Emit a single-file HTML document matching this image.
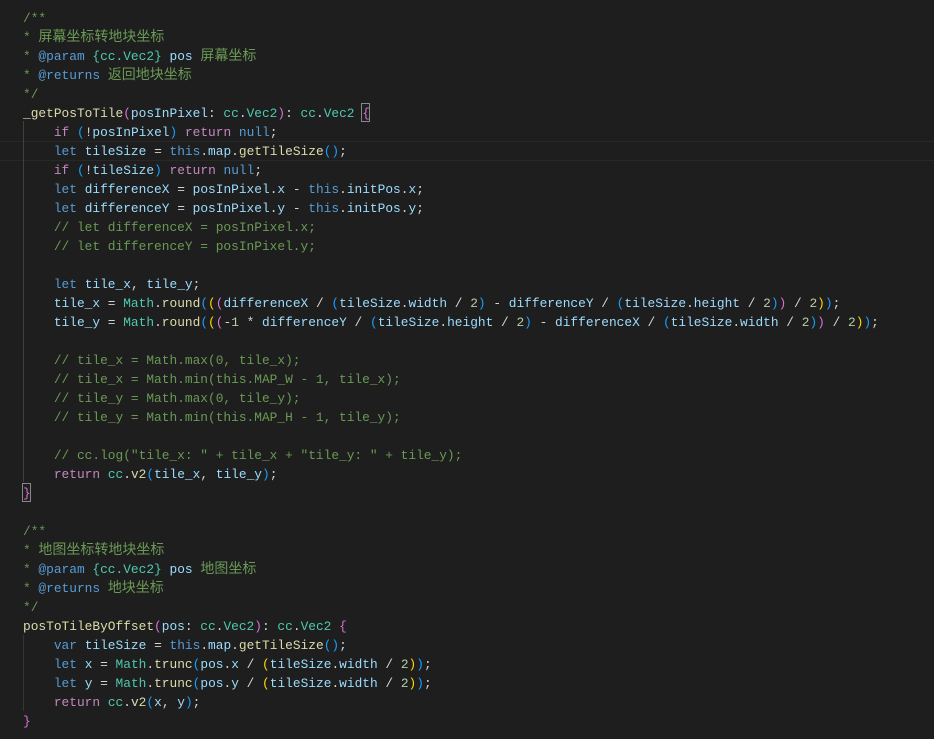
<!DOCTYPE html>
<html><head><meta charset="utf-8"><style>
html,body{margin:0;padding:0;background:#1e1e1e;width:934px;height:739px;overflow:hidden}
.code{position:absolute;left:23px;top:9px;font-family:"Liberation Mono","Noto Sans CJK SC",monospace;font-size:12.85px;color:#d4d4d4;white-space:normal}
.code div{height:19px;line-height:19px;overflow:visible;white-space:pre}
.c{color:#6a9955}.k{color:#569cd6}.r{color:#c586c0}.v{color:#9cdcfe}.f{color:#dcdcaa}.t{color:#4ec9b0}.n{color:#b5cea8}
.p1{color:#ffd700}.p2{color:#da70d6}.p3{color:#179fff}
.cj{font-size:14px;line-height:19px}
.hl{position:absolute;left:0;top:141px;width:934px;height:18px;border-top:1px solid #282828;border-bottom:1px solid #282828}
.g{position:absolute;left:23px;width:1px;background:#404040}
.bx{position:absolute;width:7px;height:17px;border:1px solid #888}
</style></head><body>
<div class="hl"></div>
<div class="g" style="top:121px;height:361px"></div>
<div class="g" style="top:635px;height:76px;background:#353535"></div>
<div class="bx" style="left:361px;top:103px"></div>
<div class="bx" style="left:22px;top:483px"></div>
<div class="code">
<div class="c">/**</div>
<div class="c">* <span class="cj">屏幕坐标转地块坐标</span></div>
<div class="c">* <span class="k">@param</span> <span class="t">{cc.Vec2}</span> <span class="v">pos</span> <span class="cj">屏幕坐标</span></div>
<div class="c">* <span class="k">@returns</span> <span class="cj">返回地块坐标</span></div>
<div class="c">*/</div>
<div><span class="f">_getPosToTile</span><span class="p2">(</span><span class="v">posInPixel</span>: <span class="t">cc</span>.<span class="t">Vec2</span><span class="p2">)</span>: <span class="t">cc</span>.<span class="t">Vec2</span> <span class="p2">{</span></div>
<div>    <span class="r">if</span> <span class="p3">(</span>!<span class="v">posInPixel</span><span class="p3">)</span> <span class="r">return</span> <span class="k">null</span>;</div>
<div>    <span class="k">let</span> <span class="v">tileSize</span> = <span class="k">this</span>.<span class="v">map</span>.<span class="f">getTileSize</span><span class="p3">()</span>;</div>
<div>    <span class="r">if</span> <span class="p3">(</span>!<span class="v">tileSize</span><span class="p3">)</span> <span class="r">return</span> <span class="k">null</span>;</div>
<div>    <span class="k">let</span> <span class="v">differenceX</span> = <span class="v">posInPixel</span>.<span class="v">x</span> - <span class="k">this</span>.<span class="v">initPos</span>.<span class="v">x</span>;</div>
<div>    <span class="k">let</span> <span class="v">differenceY</span> = <span class="v">posInPixel</span>.<span class="v">y</span> - <span class="k">this</span>.<span class="v">initPos</span>.<span class="v">y</span>;</div>
<div>    <span class="c">// let differenceX = posInPixel.x;</span></div>
<div>    <span class="c">// let differenceY = posInPixel.y;</span></div>
<div> </div>
<div>    <span class="k">let</span> <span class="v">tile_x</span>, <span class="v">tile_y</span>;</div>
<div>    <span class="v">tile_x</span> = <span class="t">Math</span>.<span class="f">round</span><span class="p3">(</span><span class="p1">(</span><span class="p2">(</span><span class="v">differenceX</span> / <span class="p3">(</span><span class="v">tileSize</span>.<span class="v">width</span> / <span class="n">2</span><span class="p3">)</span> - <span class="v">differenceY</span> / <span class="p3">(</span><span class="v">tileSize</span>.<span class="v">height</span> / <span class="n">2</span><span class="p3">)</span><span class="p2">)</span> / <span class="n">2</span><span class="p1">)</span><span class="p3">)</span>;</div>
<div>    <span class="v">tile_y</span> = <span class="t">Math</span>.<span class="f">round</span><span class="p3">(</span><span class="p1">(</span><span class="p2">(</span>-<span class="n">1</span> * <span class="v">differenceY</span> / <span class="p3">(</span><span class="v">tileSize</span>.<span class="v">height</span> / <span class="n">2</span><span class="p3">)</span> - <span class="v">differenceX</span> / <span class="p3">(</span><span class="v">tileSize</span>.<span class="v">width</span> / <span class="n">2</span><span class="p3">)</span><span class="p2">)</span> / <span class="n">2</span><span class="p1">)</span><span class="p3">)</span>;</div>
<div> </div>
<div>    <span class="c">// tile_x = Math.max(0, tile_x);</span></div>
<div>    <span class="c">// tile_x = Math.min(this.MAP_W - 1, tile_x);</span></div>
<div>    <span class="c">// tile_y = Math.max(0, tile_y);</span></div>
<div>    <span class="c">// tile_y = Math.min(this.MAP_H - 1, tile_y);</span></div>
<div> </div>
<div>    <span class="c">// cc.log("tile_x: " + tile_x + "tile_y: " + tile_y);</span></div>
<div>    <span class="r">return</span> <span class="t">cc</span>.<span class="f">v2</span><span class="p3">(</span><span class="v">tile_x</span>, <span class="v">tile_y</span><span class="p3">)</span>;</div>
<div><span class="p2">}</span></div>
<div> </div>
<div class="c">/**</div>
<div class="c">* <span class="cj">地图坐标转地块坐标</span></div>
<div class="c">* <span class="k">@param</span> <span class="t">{cc.Vec2}</span> <span class="v">pos</span> <span class="cj">地图坐标</span></div>
<div class="c">* <span class="k">@returns</span> <span class="cj">地块坐标</span></div>
<div class="c">*/</div>
<div><span class="f">posToTileByOffset</span><span class="p2">(</span><span class="v">pos</span>: <span class="t">cc</span>.<span class="t">Vec2</span><span class="p2">)</span>: <span class="t">cc</span>.<span class="t">Vec2</span> <span class="p2">{</span></div>
<div>    <span class="k">var</span> <span class="v">tileSize</span> = <span class="k">this</span>.<span class="v">map</span>.<span class="f">getTileSize</span><span class="p3">()</span>;</div>
<div>    <span class="k">let</span> <span class="v">x</span> = <span class="t">Math</span>.<span class="f">trunc</span><span class="p3">(</span><span class="v">pos</span>.<span class="v">x</span> / <span class="p1">(</span><span class="v">tileSize</span>.<span class="v">width</span> / <span class="n">2</span><span class="p1">)</span><span class="p3">)</span>;</div>
<div>    <span class="k">let</span> <span class="v">y</span> = <span class="t">Math</span>.<span class="f">trunc</span><span class="p3">(</span><span class="v">pos</span>.<span class="v">y</span> / <span class="p1">(</span><span class="v">tileSize</span>.<span class="v">width</span> / <span class="n">2</span><span class="p1">)</span><span class="p3">)</span>;</div>
<div>    <span class="r">return</span> <span class="t">cc</span>.<span class="f">v2</span><span class="p3">(</span><span class="v">x</span>, <span class="v">y</span><span class="p3">)</span>;</div>
<div><span class="p2">}</span></div>
</div>
</body></html>
